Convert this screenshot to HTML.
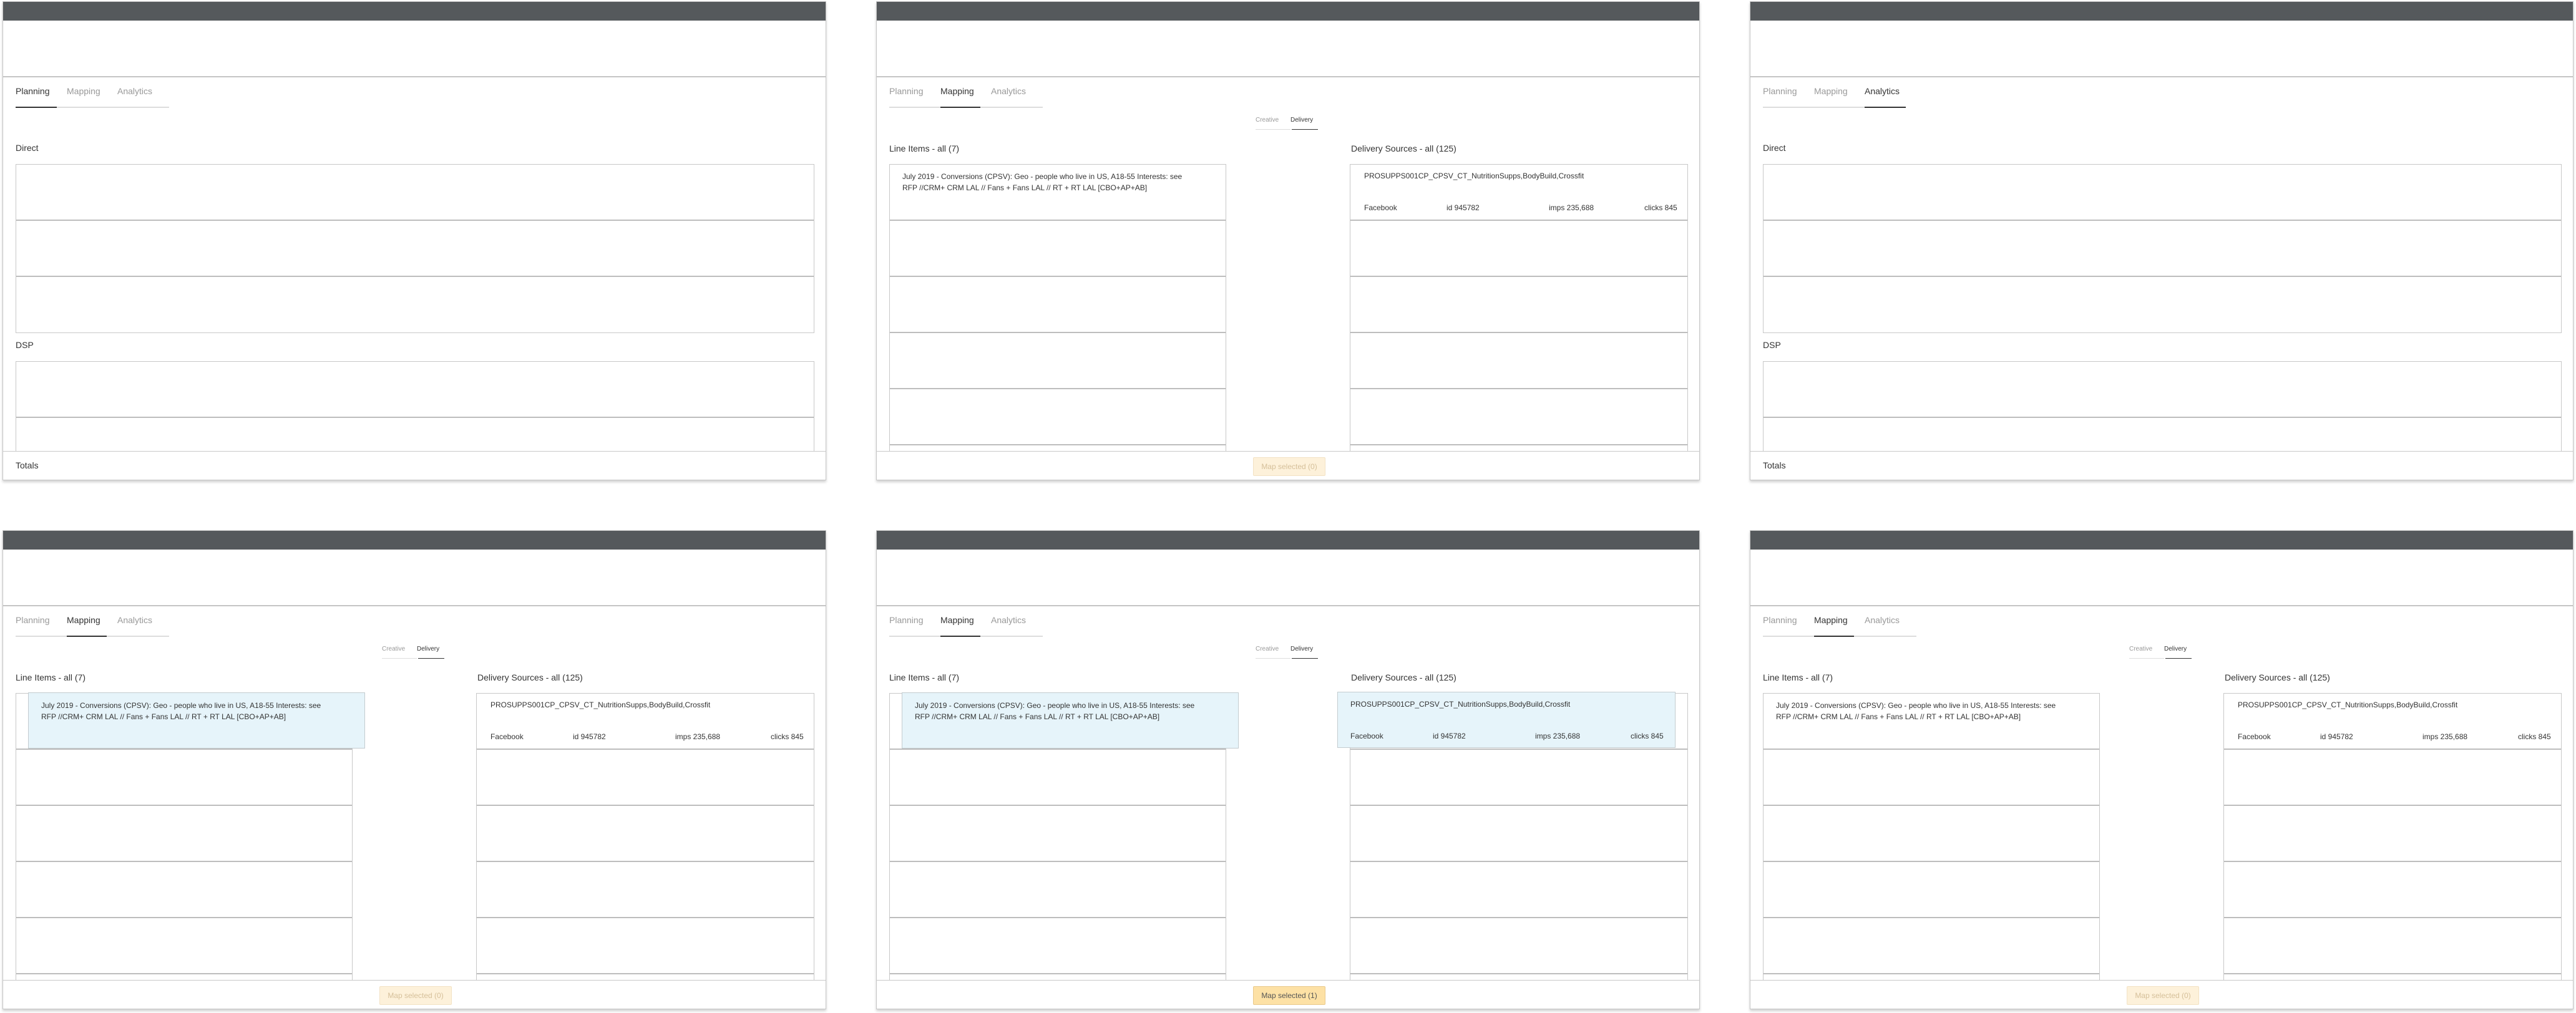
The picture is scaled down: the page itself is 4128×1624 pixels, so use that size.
<!DOCTYPE html>
<html><head><meta charset="utf-8">
<style>
*{box-sizing:border-box;margin:0;padding:0}
body{width:4128px;height:1624px;background:#fff;position:relative;overflow:hidden;font-family:"Liberation Sans",sans-serif;color:#333}
.p{position:absolute;width:1320px;height:768px;border:1px solid #c6c6c6;background:#fff;box-shadow:0 3px 4px rgba(0,0,0,.18);overflow:hidden}
.bar{position:absolute;left:-1px;right:-1px;top:-1px;height:31px;background:#55595c}
.hdr{position:absolute;left:0;right:0;top:30px;height:91px;border-bottom:2px solid #c4c4c4}
.tab{position:absolute;top:135px;font-size:14px;line-height:16px;color:#999}
.tab.a{color:#333}
.ul{position:absolute;top:168px;height:2px;background:#ddd}
.ul.a{background:#333}
.lbl{position:absolute;font-size:14px;line-height:16px;color:#333}
.box{position:absolute;border:1px solid #c8c8c8;border-bottom:none;background:#fff}
.row{height:90px;border-bottom:2px solid #bdbdbd;position:relative}
.box .row:last-child{border-bottom:1px solid #c8c8c8}
.foot{position:absolute;left:0;right:0;top:720px;height:48px;border-top:1px solid #c8c8c8;background:#fff;z-index:5}
.btn{position:absolute;left:603px;top:9px;width:116px;height:30px;border:1px solid #f3e2c4;background:#fdf1da;color:#d6c09a;font-size:12px;line-height:28px;text-align:center;border-radius:2px}
.btn.on{background:#fde1a5;border-color:#e9c98c;color:#555}
.tog{position:absolute;top:184px;font-size:10px;line-height:12px}
.t12{position:absolute;font-size:12px;line-height:18px;color:#333;white-space:nowrap}
.sel{position:absolute;height:90px;background:#e6f4fa;border:1px solid #c3cbcf;z-index:3}
</style></head><body>

<div class="p" style="left:4px;top:2px">
<div class="bar"></div><div class="hdr"></div>
<div class="tab a" style="left:20px">Planning</div><div class="tab" style="left:102px">Mapping</div><div class="tab" style="left:183px">Analytics</div>
<div class="ul" style="left:86px;width:180px"></div><div class="ul a" style="left:20px;width:66px"></div>
<div class="lbl" style="left:20px;top:226px">Direct</div>
<div class="box" style="left:20px;top:260px;width:1280px"><div class="row"></div><div class="row"></div><div class="row" style="border-bottom:1px solid #c8c8c8"></div></div>
<div class="lbl" style="left:20px;top:542px">DSP</div>
<div class="box" style="left:20px;top:576px;width:1280px"><div class="row"></div><div class="row"></div></div>
<div class="foot"><div class="lbl" style="left:20px;top:14px">Totals</div></div>
</div>

<div class="p" style="left:2804px;top:2px">
<div class="bar"></div><div class="hdr"></div>
<div class="tab" style="left:20px">Planning</div><div class="tab" style="left:102px">Mapping</div><div class="tab a" style="left:183px">Analytics</div>
<div class="ul" style="left:20px;width:163px"></div><div class="ul a" style="left:183px;width:66px"></div>
<div class="lbl" style="left:20px;top:226px">Direct</div>
<div class="box" style="left:20px;top:260px;width:1280px"><div class="row"></div><div class="row"></div><div class="row" style="border-bottom:1px solid #c8c8c8"></div></div>
<div class="lbl" style="left:20px;top:542px">DSP</div>
<div class="box" style="left:20px;top:576px;width:1280px"><div class="row"></div><div class="row"></div></div>
<div class="foot"><div class="lbl" style="left:20px;top:14px">Totals</div></div>
</div>

<div class="p" style="left:1404px;top:2px">
<div class="bar"></div><div class="hdr"></div>
<div class="tab" style="left:20px">Planning</div><div class="tab a" style="left:102px">Mapping</div><div class="tab" style="left:183px">Analytics</div>
<div class="ul" style="left:20px;width:82px"></div><div class="ul a" style="left:102px;width:64px"></div><div class="ul" style="left:166px;width:100px"></div>
<div class="tog" style="left:607px;color:#999">Creative</div><div class="tog" style="left:663px;color:#333">Delivery</div>
<div class="ul" style="left:607px;top:204px;width:56px;height:1px"></div><div class="ul a" style="left:665px;top:204px;width:42px;height:1px"></div>
<div class="lbl" style="left:20px;top:227px">Line Items - all (7)</div>
<div class="lbl" style="left:760px;top:227px">Delivery Sources - all (125)</div>
<div class="box" style="left:20px;top:260px;width:540px"><div class="row"><div class="t12" style="left:20px;top:10px">July 2019 - Conversions (CPSV): Geo - people who live in US, A18-55 Interests: see<br>RFP //CRM+ CRM LAL // Fans + Fans LAL // RT + RT LAL [CBO+AP+AB]</div></div><div class="row"></div><div class="row"></div><div class="row"></div><div class="row"></div><div class="row"></div></div>
<div class="box" style="left:758px;top:260px;width:542px"><div class="row"><div class="t12" style="left:22px;top:9px">PROSUPPS001CP_CPSV_CT_NutritionSupps,BodyBuild,Crossfit</div><div class="t12" style="left:22px;top:60px">Facebook</div><div class="t12" style="left:154px;top:60px">id 945782</div><div class="t12" style="left:318px;top:60px">imps 235,688</div><div class="t12" style="left:471px;top:60px">clicks 845</div></div><div class="row"></div><div class="row"></div><div class="row"></div><div class="row"></div><div class="row"></div></div>
<div class="foot"><div class="btn">Map selected (0)</div></div>
</div>

<div class="p" style="left:4px;top:850px">
<div class="bar"></div><div class="hdr"></div>
<div class="tab" style="left:20px">Planning</div><div class="tab a" style="left:102px">Mapping</div><div class="tab" style="left:183px">Analytics</div>
<div class="ul" style="left:20px;width:82px"></div><div class="ul a" style="left:102px;width:64px"></div><div class="ul" style="left:166px;width:100px"></div>
<div class="tog" style="left:607px;color:#999">Creative</div><div class="tog" style="left:663px;color:#333">Delivery</div>
<div class="ul" style="left:607px;top:204px;width:56px;height:1px"></div><div class="ul a" style="left:665px;top:204px;width:42px;height:1px"></div>
<div class="lbl" style="left:20px;top:227px">Line Items - all (7)</div>
<div class="lbl" style="left:760px;top:227px">Delivery Sources - all (125)</div>
<div class="box" style="left:20px;top:260px;width:540px"><div class="row"></div><div class="row"></div><div class="row"></div><div class="row"></div><div class="row"></div><div class="row"></div></div>
<div class="sel" style="left:40px;top:259px;width:540px"><div class="t12" style="left:20px;top:11px">July 2019 - Conversions (CPSV): Geo - people who live in US, A18-55 Interests: see<br>RFP //CRM+ CRM LAL // Fans + Fans LAL // RT + RT LAL [CBO+AP+AB]</div></div>
<div class="box" style="left:758px;top:260px;width:542px"><div class="row"><div class="t12" style="left:22px;top:9px">PROSUPPS001CP_CPSV_CT_NutritionSupps,BodyBuild,Crossfit</div><div class="t12" style="left:22px;top:60px">Facebook</div><div class="t12" style="left:154px;top:60px">id 945782</div><div class="t12" style="left:318px;top:60px">imps 235,688</div><div class="t12" style="left:471px;top:60px">clicks 845</div></div><div class="row"></div><div class="row"></div><div class="row"></div><div class="row"></div><div class="row"></div></div>
<div class="foot"><div class="btn">Map selected (0)</div></div>
</div>

<div class="p" style="left:1404px;top:850px">
<div class="bar"></div><div class="hdr"></div>
<div class="tab" style="left:20px">Planning</div><div class="tab a" style="left:102px">Mapping</div><div class="tab" style="left:183px">Analytics</div>
<div class="ul" style="left:20px;width:82px"></div><div class="ul a" style="left:102px;width:64px"></div><div class="ul" style="left:166px;width:100px"></div>
<div class="tog" style="left:607px;color:#999">Creative</div><div class="tog" style="left:663px;color:#333">Delivery</div>
<div class="ul" style="left:607px;top:204px;width:56px;height:1px"></div><div class="ul a" style="left:665px;top:204px;width:42px;height:1px"></div>
<div class="lbl" style="left:20px;top:227px">Line Items - all (7)</div>
<div class="lbl" style="left:760px;top:227px">Delivery Sources - all (125)</div>
<div class="box" style="left:20px;top:260px;width:540px"><div class="row"></div><div class="row"></div><div class="row"></div><div class="row"></div><div class="row"></div><div class="row"></div></div>
<div class="sel" style="left:40px;top:259px;width:540px"><div class="t12" style="left:20px;top:11px">July 2019 - Conversions (CPSV): Geo - people who live in US, A18-55 Interests: see<br>RFP //CRM+ CRM LAL // Fans + Fans LAL // RT + RT LAL [CBO+AP+AB]</div></div>
<div class="box" style="left:758px;top:260px;width:542px"><div class="row"></div><div class="row"></div><div class="row"></div><div class="row"></div><div class="row"></div><div class="row"></div></div>
<div class="sel" style="left:738px;top:258px;width:542px"><div class="t12" style="left:20px;top:10px">PROSUPPS001CP_CPSV_CT_NutritionSupps,BodyBuild,Crossfit</div><div class="t12" style="left:20px;top:61px">Facebook</div><div class="t12" style="left:152px;top:61px">id 945782</div><div class="t12" style="left:316px;top:61px">imps 235,688</div><div class="t12" style="left:469px;top:61px">clicks 845</div></div>
<div class="foot"><div class="btn on">Map selected (1)</div></div>
</div>

<div class="p" style="left:2804px;top:850px">
<div class="bar"></div><div class="hdr"></div>
<div class="tab" style="left:20px">Planning</div><div class="tab a" style="left:102px">Mapping</div><div class="tab" style="left:183px">Analytics</div>
<div class="ul" style="left:20px;width:82px"></div><div class="ul a" style="left:102px;width:64px"></div><div class="ul" style="left:166px;width:100px"></div>
<div class="tog" style="left:607px;color:#999">Creative</div><div class="tog" style="left:663px;color:#333">Delivery</div>
<div class="ul" style="left:607px;top:204px;width:56px;height:1px"></div><div class="ul a" style="left:665px;top:204px;width:42px;height:1px"></div>
<div class="lbl" style="left:20px;top:227px">Line Items - all (7)</div>
<div class="lbl" style="left:760px;top:227px">Delivery Sources - all (125)</div>
<div class="box" style="left:20px;top:260px;width:540px"><div class="row"><div class="t12" style="left:20px;top:10px">July 2019 - Conversions (CPSV): Geo - people who live in US, A18-55 Interests: see<br>RFP //CRM+ CRM LAL // Fans + Fans LAL // RT + RT LAL [CBO+AP+AB]</div></div><div class="row"></div><div class="row"></div><div class="row"></div><div class="row"></div><div class="row"></div></div>
<div class="box" style="left:758px;top:260px;width:542px"><div class="row"><div class="t12" style="left:22px;top:9px">PROSUPPS001CP_CPSV_CT_NutritionSupps,BodyBuild,Crossfit</div><div class="t12" style="left:22px;top:60px">Facebook</div><div class="t12" style="left:154px;top:60px">id 945782</div><div class="t12" style="left:318px;top:60px">imps 235,688</div><div class="t12" style="left:471px;top:60px">clicks 845</div></div><div class="row"></div><div class="row"></div><div class="row"></div><div class="row"></div><div class="row"></div></div>
<div class="foot"><div class="btn">Map selected (0)</div></div>
</div>

</body></html>
